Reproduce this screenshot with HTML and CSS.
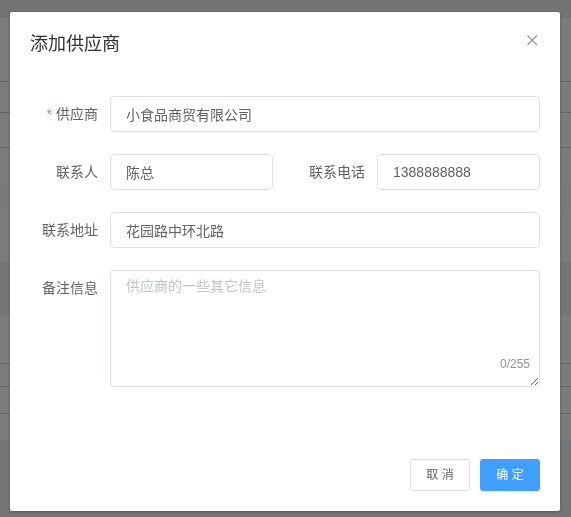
FILE: index.html
```html
<!DOCTYPE html>
<html lang="zh-CN">
<head>
<meta charset="utf-8">
<title>添加供应商</title>
<link rel="stylesheet" href="styles.css">
</head>
<body>
<div class="page">
  <div class="band band-top"></div>
  <div class="band band-a"></div>
  <div class="band band-b line"></div>
  <div class="band band-c line"></div>
  <div class="band band-d line"></div>
  <div class="band band-e"></div>
  <div class="band band-f"></div>
  <div class="band band-g"></div>
  <div class="band band-h"></div>
  <div class="band band-i line"></div>
  <div class="band band-j line"></div>
  <div class="band band-k line"></div>
  <div class="band band-bottom"></div>
</div>

<div class="mask">
  <div class="dialog">
    <div class="dialog-header">
      <span class="dialog-title">添加供应商</span>
      <button class="dialog-close" type="button" aria-label="关闭">
        <svg width="16" height="16" viewBox="0 0 16 16"><path d="M3.5 3.5 L13 13 M13 3.5 L3.5 13" stroke="#909399" stroke-width="1.1" fill="none"/></svg>
      </button>
    </div>
    <div class="dialog-body">
      <div class="form-item">
        <label class="form-label"><span class="req">*</span>供应商</label>
        <div class="form-content"><input class="input" type="text" value="小食品商贸有限公司"></div>
      </div>
      <div class="form-row">
        <div class="form-item">
          <label class="form-label">联系人</label>
          <div class="form-content"><input class="input" type="text" value="陈总"></div>
        </div>
        <div class="form-item">
          <label class="form-label">联系电话</label>
          <div class="form-content"><input class="input" type="text" value="1388888888"></div>
        </div>
      </div>
      <div class="form-item">
        <label class="form-label">联系地址</label>
        <div class="form-content"><input class="input" type="text" value="花园路中环北路"></div>
      </div>
      <div class="form-item form-item-last">
        <label class="form-label">备注信息</label>
        <div class="form-content textarea-wrap">
          <textarea class="textarea" placeholder="供应商的一些其它信息"></textarea>
          <span class="count">0/255</span>
        </div>
      </div>
    </div>
    <div class="dialog-footer">
      <button class="btn" type="button">取 消</button>
      <button class="btn btn-primary" type="button">确 定</button>
    </div>
  </div>
</div>
</body>
</html>
```

FILE: styles.css
```css
* { box-sizing: border-box; }

html, body {
  margin: 0;
  padding: 0;
  width: 571px;
  height: 517px;
  overflow: hidden;
  font-family: "Liberation Sans", "Noto Sans CJK SC", sans-serif;
}

.page {
  display: flex;
  flex-direction: column;
  height: 517px;
  background: #f7f7f7;
}

.band { flex: none; background: #f7f7f7; }
.band.line { border-top: 1px solid #cfcfcf; }
.band-top { height: 18px; background: #e4e6ea; }
.band-a { height: 63px; }
.band-b { height: 31px; }
.band-c { height: 35px; }
.band-d { height: 31px; }
.band-e { height: 32px; background: #f2f4f8; }
.band-f { height: 52px; }
.band-g { height: 53px; background: #e8e8e8; }
.band-h { height: 48px; }
.band-i { height: 23px; }
.band-j { height: 27px; }
.band-k { height: 27px; }
.band-bottom { flex: 1; background: #e9eaec; }

.mask {
  position: fixed;
  inset: 0;
  background: rgba(0, 0, 0, 0.5);
}

.dialog {
  position: absolute;
  left: 10px;
  top: 12px;
  width: 550px;
  background: #fff;
  border-radius: 2px;
  box-shadow: 0 1px 3px rgba(0, 0, 0, 0.3);
}

.dialog-header {
  position: relative;
  padding: 20px 20px 10px;
}

.dialog-title {
  display: block;
  font-size: 18px;
  line-height: 24px;
  color: #303133;
}

.dialog-close {
  position: absolute;
  top: 20px;
  right: 20px;
  width: 16px;
  height: 16px;
  padding: 0;
  border: 0;
  background: transparent;
  display: flex;
}

.dialog-body {
  padding: 30px 20px;
}

.form-item {
  display: flex;
  margin-bottom: 22px;
}

.form-item-last { margin-bottom: 32px; }

.form-row {
  display: grid;
  grid-template-columns: 1fr 1fr;
  column-gap: 24px;
}

.form-label {
  flex: none;
  width: 80px;
  padding-right: 12px;
  text-align: right;
  font-size: 14px;
  line-height: 36px;
  color: #606266;
}

.req {
  color: #f56c6c;
  margin-right: 4px;
}

.form-content {
  flex: 1;
  min-width: 0;
}

.input {
  display: block;
  width: 100%;
  height: 36px;
  padding: 0 15px;
  border: 1px solid #dcdfe6;
  border-radius: 4px;
  font-family: inherit;
  font-size: 14px;
  color: #606266;
  background: #fff;
  outline: none;
}

.textarea-wrap { position: relative; }

.textarea {
  display: block;
  width: 100%;
  height: 117px;
  padding: 5px 15px;
  border: 1px solid #dcdfe6;
  border-radius: 4px;
  font-family: inherit;
  font-size: 14px;
  line-height: 1.5;
  color: #606266;
  resize: vertical;
  outline: none;
}

.textarea::placeholder { color: #c0c4cc; }

.count {
  position: absolute;
  right: 10px;
  bottom: 16px;
  font-size: 12px;
  line-height: 14px;
  color: #909399;
  background: #fff;
}

.dialog-footer {
  display: flex;
  justify-content: flex-end;
  gap: 10px;
  padding: 10px 20px 20px;
}

.btn {
  height: 32px;
  padding: 0 15px;
  min-width: 60px;
  border: 1px solid #dcdfe6;
  border-radius: 3px;
  background: #fff;
  color: #606266;
  font-family: inherit;
  font-size: 12px;
  line-height: 30px;
}

.btn-primary {
  background: #409eff;
  border-color: #409eff;
  color: #fff;
}
```
